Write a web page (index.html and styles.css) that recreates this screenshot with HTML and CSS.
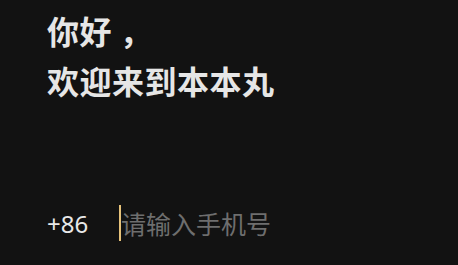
FILE: index.html
```html
<!DOCTYPE html>
<html lang="zh-CN">
<head>
<meta charset="utf-8">
<title>登录</title>
<link rel="stylesheet" href="styles.css">
</head>
<body>
<main class="login">
  <h1 class="greeting">
    <span class="greeting-line">你好 ，</span>
    <span class="greeting-line">欢迎来到本本丸</span>
  </h1>
  <div class="phone-row">
    <span class="country-code">+86</span>
    <div class="phone-input">
      <span class="caret"></span>
      <span class="placeholder">请输入手机号</span>
    </div>
  </div>
</main>
</body>
</html>
```
FILE: styles.css
```css
html, body {
  margin: 0;
  padding: 0;
  background: #121212;
}
body {
  width: 458px;
  height: 265px;
  overflow: hidden;
  font-family: "Noto Sans CJK SC", "Noto Sans", sans-serif;
}
.login {
  display: flex;
  flex-direction: column;
  padding: 5px 0 0 47px;
}
.greeting {
  margin: 0;
  display: flex;
  flex-direction: column;
  font-size: 32px;
  letter-spacing: 0.5px;
  line-height: 50px;
  font-weight: 700;
  color: #e6e6e6;
}
.phone-row {
  display: flex;
  align-items: center;
  margin-top: 100px;
  height: 36px;
}
.country-code {
  font-family: "Noto Sans", sans-serif;
  font-size: 24px;
  color: #e8e8e8;
  width: 72px;
}
.phone-input {
  display: flex;
  align-items: center;
}
.caret {
  width: 2px;
  height: 36px;
  background: #e6c27a;
}
.placeholder {
  font-size: 25px;
  color: #6e6e6e;
}
```
